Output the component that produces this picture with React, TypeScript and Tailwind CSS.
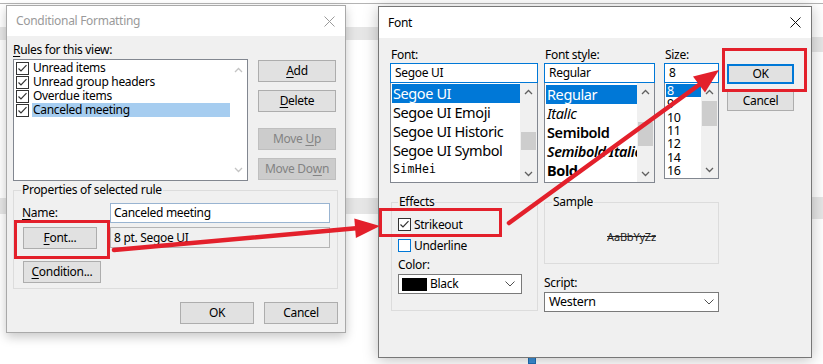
import React from 'react';

function U({ children }: { children: React.ReactNode }) {
  return <span className="underline underline-offset-2 decoration-1">{children}</span>;
}

function Check({ checked, blue }: { checked?: boolean; blue?: boolean }) {
  return (
    <svg width="13" height="13" viewBox="0 0 13 13" className="shrink-0">
      <rect x="0.5" y="0.5" width="12" height="12" fill="white" stroke={blue ? '#0078d7' : '#333333'} />
      {checked && <path d="M2.5 6.5 L5 9 L10.5 3.2" fill="none" stroke="#333333" strokeWidth="1.2" />}
    </svg>
  );
}

function Chev({ up, color = '#606060' }: { up?: boolean; color?: string }) {
  return (
    <svg width="9" height="6" viewBox="0 0 9 6">
      <path d={up ? 'M1 5 L4.5 1.5 L8 5' : 'M1 1 L4.5 4.5 L8 1'} fill="none" stroke={color} strokeWidth="1.3" />
    </svg>
  );
}

function XIcon({ color }: { color: string }) {
  return (
    <svg width="11" height="11" viewBox="0 0 11 11">
      <path d="M0.5 0.5 L10.5 10.5 M10.5 0.5 L0.5 10.5" stroke={color} strokeWidth="1" fill="none" />
    </svg>
  );
}

function DropChev() {
  return (
    <svg width="10" height="6" viewBox="0 0 10 6">
      <path d="M0.5 0.5 L5 5 L9.5 0.5" fill="none" stroke="#505050" strokeWidth="1" />
    </svg>
  );
}

function Btn({ children, className = '', disabled }: { children: React.ReactNode; className?: string; disabled?: boolean }) {
  return (
    <div
      className={
        'flex items-center justify-center border ' +
        (disabled ? 'border-[#bfbfbf] bg-[#cccccc] text-[#838383] ' : 'border-[#adadad] bg-[#e1e1e1] text-black ') +
        className
      }
    >
      {children}
    </div>
  );
}

function ScrollBar({ thumbTop, thumbH, className = '' }: { thumbTop: number; thumbH: number; className?: string }) {
  return (
    <div className={'flex w-[17px] shrink-0 flex-col bg-[#f0f0f0] ' + className}>
      <div className="flex h-[17px] items-center justify-center">
        <Chev up />
      </div>
      <div className="relative flex-1">
        <div className="absolute left-[1px] right-[1px] bg-[#cdcdcd]" style={{ top: thumbTop, height: thumbH }} />
      </div>
      <div className="flex h-[17px] items-center justify-center">
        <Chev />
      </div>
    </div>
  );
}

function ConditionalFormatting() {
  const rules = ['Unread items', 'Unread group headers', 'Overdue items', 'Canceled meeting'];
  return (
    <div className="absolute left-[6px] top-[5px] flex h-[328px] w-[340px] flex-col border border-[#a9a9a9] bg-[#f0f0f0] shadow-[0_4px_10px_rgba(0,0,0,0.22)]">
      <div className="flex h-[30px] shrink-0 items-center justify-between bg-white pl-[9px] pr-[10px] text-[12px] text-[#9a9a9a]">
        <span>Conditional Formatting</span>
        <XIcon color="#9a9a9a" />
      </div>
      <div className="flex flex-col pl-[6px] pr-[7px] pt-[6px] text-[12px] text-black">
        <div className="h-[16px] leading-[16px]">
          <U>R</U>ules for this view:
        </div>
        <div className="mt-[1px] flex">
          <div className="flex h-[122px] w-[235px] border border-[#828790] bg-white">
            <div className="flex flex-1 flex-col pt-[1px]">
              {rules.map((r, i) => (
                <div key={r} className="flex h-[14px] items-center pl-[2px]">
                  <Check checked />
                  <span
                    className={
                      'ml-[3px] flex h-[14px] w-[198px] items-center pl-[1px] leading-[14px] ' +
                      (i === 3 ? 'bg-[#a6cdf0]' : '')
                    }
                  >
                    {r}
                  </span>
                </div>
              ))}
            </div>
            <div className="flex w-[17px] flex-col items-center justify-between py-[7px]">
              <Chev up color="#c4c4c4" />
              <Chev color="#c4c4c4" />
            </div>
          </div>
          <div className="ml-[10px] flex w-[78px] flex-col pt-[1px]">
            <Btn className="h-[22px]">
              <U>A</U>dd
            </Btn>
            <Btn className="mt-[8px] h-[22px]">
              <U>D</U>elete
            </Btn>
            <Btn className="mt-[16px] h-[22px]" disabled>
              Move&nbsp;<U>U</U>p
            </Btn>
            <Btn className="mt-[8px] h-[22px]" disabled>
              Move Do<U>w</U>n
            </Btn>
          </div>
        </div>
        <fieldset className="mt-[1px] h-[107px] w-[325px] border border-[#dcdcdc] px-0">
          <legend className="ml-[7px] px-[1px] leading-[16px]">Properties of selected rule</legend>
          <div className="mt-[5px] flex items-center">
            <span className="w-[96px] pl-[8px]">
              <U>N</U>ame:
            </span>
            <div className="flex h-[20px] w-[220px] items-center border border-[#99b4d1] bg-white pl-[3px]">Canceled meeting</div>
          </div>
          <div className="mt-[4px] flex items-start">
            <div className="w-[96px] pl-[9px]">
              <Btn className="h-[22px] w-[74px]">
                <U>F</U>ont...
              </Btn>
            </div>
            <div className="flex h-[21px] w-[220px] items-center border border-[#b4b4b4] bg-[#f0f0f0] pl-[3px]">8 pt. Segoe UI</div>
          </div>
          <div className="mt-[12px] pl-[9px]">
            <Btn className="h-[22px] w-[78px]">
              <U>C</U>ondition...
            </Btn>
          </div>
        </fieldset>
        <div className="mt-[13px] flex justify-end gap-[10px]">
          <Btn className="h-[22px] w-[74px]">OK</Btn>
          <Btn className="h-[22px] w-[74px]">Cancel</Btn>
        </div>
      </div>
    </div>
  );
}

function FontDialog() {
  const fonts = ['Segoe UI', 'Segoe UI Emoji', 'Segoe UI Historic', 'Segoe UI Symbol'];
  const sizes = ['8', '9', '10', '11', '12', '14', '16'];
  return (
    <div className="absolute left-[378px] top-[6px] flex h-[352px] w-[434px] flex-col border border-[#777777] bg-[#f0f0f0] shadow-[0_2px_14px_rgba(0,0,0,0.25)]">
      <div className="flex h-[31px] shrink-0 items-center justify-between bg-white pl-[9px] pr-[10px] text-[12px] text-black">
        <span>Font</span>
        <XIcon color="#111111" />
      </div>
      <div className="flex flex-col pl-[11px] pt-[9px] text-[12px] text-black">
        <div className="flex items-start">
          {/* Font column */}
          <div className="flex w-[148px] flex-col">
            <div className="h-[16px] pl-[1px] leading-[16px]">Font:</div>
            <div className="flex h-[20px] items-center border border-[#0078d7] bg-white pl-[4px]">Segoe UI</div>
            <div className="flex h-[100px] border border-[#828790] border-t-0 bg-white">
              <div className="flex flex-1 flex-col pl-[1px] pt-[1px] text-[14.5px] tracking-[-0.4px]">
                {fonts.map((f, i) => (
                  <div
                    key={f}
                    className={'flex h-[19px] items-center pl-[1px] leading-[19px] ' + (i === 0 ? 'bg-[#0078d7] text-white' : '')}
                  >
                    {f}
                  </div>
                ))}
                <div className="flex h-[19px] items-center pl-[1px] font-['DejaVu_Sans_Mono',monospace] text-[11.5px] leading-[19px] tracking-[0.3px]">
                  SimHei
                </div>
              </div>
              <ScrollBar thumbTop={32} thumbH={18} />
            </div>
          </div>
          {/* Style column */}
          <div className="ml-[6px] flex w-[111px] flex-col">
            <div className="h-[16px] pl-[1px] leading-[16px]">Font style:</div>
            <div className="flex h-[20px] items-center border border-[#0078d7] bg-white pl-[4px]">Regular</div>
            <div className="flex h-[100px] border border-[#828790] border-t-0 bg-white">
              <div className="flex min-w-0 flex-1 flex-col overflow-hidden pl-[1px] pt-[2px] text-[14.5px] leading-[19px] tracking-[-0.4px]">
                <div className="flex h-[19px] items-center bg-[#0078d7] pl-[1px] text-white">Regular</div>
                <div className="flex h-[19px] items-center pl-[1px] italic">Italic</div>
                <div className="flex h-[19px] items-center pl-[1px] font-semibold">Semibold</div>
                <div className="flex h-[19px] items-center whitespace-nowrap pl-[1px] font-semibold italic">Semibold Italic</div>
                <div className="flex h-[19px] items-center pl-[1px] font-bold">Bold</div>
              </div>
              <ScrollBar thumbTop={22} thumbH={24} />
            </div>
          </div>
          {/* Size column */}
          <div className="ml-[9px] flex w-[55px] flex-col">
            <div className="h-[16px] pl-[1px] leading-[16px]">Size:</div>
            <div className="flex h-[20px] items-center border border-[#0078d7] bg-white pl-[4px]">8</div>
            <div className="flex h-[96px] border border-[#828790] border-t-0 bg-white">
              <div className="flex flex-1 flex-col pl-[1px] pt-[1px] text-[12.5px] leading-[13px]">
                {sizes.map((s, i) => (
                  <div
                    key={s}
                    className={'flex h-[13.3px] items-center pl-[1px] ' + (i === 0 ? 'bg-[#0078d7] text-white' : '')}
                  >
                    {s}
                  </div>
                ))}
              </div>
              <ScrollBar thumbTop={1} thumbH={25} />
            </div>
          </div>
          {/* Buttons */}
          <div className="ml-[8px] mt-[17px] flex w-[67px] flex-col">
            <Btn className="h-[20px] !border-2 !border-[#0078d7]">OK</Btn>
            <Btn className="mt-[7px] h-[20px]">Cancel</Btn>
          </div>
        </div>
        <div className="mt-[11px] flex items-start">
          <fieldset className="ml-[1px] h-[117px] w-[147px] border border-[#dcdcdc] px-0">
            <legend className="ml-[6px] px-[1px] leading-[16px]">Effects</legend>
            <div className="mt-[7px] flex h-[15px] items-center pl-[6px]">
              <Check checked />
              <span className="ml-[3px]">Strikeout</span>
            </div>
            <div className="mt-[6px] flex h-[15px] items-center pl-[6px]">
              <Check blue />
              <span className="ml-[3px]">Underline</span>
            </div>
            <div className="mt-[4px] h-[16px] pl-[6px] leading-[16px]">Color:</div>
            <div className="ml-[6px] mt-[1px] flex h-[20px] w-[124px] items-center border border-[#7a7a7a] bg-white pl-[3px] pr-[6px]">
              <div className="h-[13px] w-[25px] bg-black" />
              <span className="ml-[3px] flex-1">Black</span>
              <DropChev />
            </div>
          </fieldset>
          <div className="ml-[6px] flex w-[175px] flex-col">
            <fieldset className="h-[70px] border border-[#dcdcdc] px-0">
              <legend className="ml-[7px] px-[1px] leading-[16px]">Sample</legend>
              <div className="flex h-[50px] items-center justify-center pt-[4px] text-[11px] tracking-[-0.2px] text-[#222] line-through">AaBbYyZz</div>
            </fieldset>
            <div className="mt-[11px] h-[16px] leading-[16px]">Script:</div>
            <div className="mt-[1px] flex h-[20px] items-center border border-[#7a7a7a] bg-white pl-[4px] pr-[4px] text-[12.5px]">
              <span className="flex-1">Western</span>
              <DropChev />
            </div>
          </div>
        </div>
      </div>
    </div>
  );
}

function Annotations() {
  const red = '#e3202b';
  return (
    <svg className="pointer-events-none absolute left-0 top-0" width="823" height="364" viewBox="0 0 823 364">
      <rect x="15.5" y="221.5" width="93" height="36" fill="none" stroke={red} strokeWidth="3" />
      <rect x="380.5" y="209.5" width="120" height="26" fill="none" stroke={red} strokeWidth="3" />
      <rect x="723.5" y="49.5" width="82" height="41" fill="none" stroke={red} strokeWidth="3" />
      <line x1="114" y1="250" x2="356" y2="228.2" stroke={red} strokeWidth="4.5" strokeLinecap="round" />
      <polygon points="380,226 355.9,238 354.3,218.6" fill={red} />
      <line x1="509" y1="223" x2="699.5" y2="84.5" stroke={red} strokeWidth="4.5" strokeLinecap="round" />
      <polygon points="719,70 705,92.5 693,76.5" fill={red} />
    </svg>
  );
}

export default function App() {
  return (
    <div className="relative h-[364px] w-[823px] overflow-hidden bg-white font-['Noto_Sans',sans-serif] tracking-[-0.3px]">
      {/* backdrop */}
      <div className="absolute left-0 top-[3px] h-px w-full bg-[#b4b4b4]" />
      <div className="absolute left-0 top-[27px] h-[13px] w-[600px] bg-[#e6e6e6]" />
      <div className="absolute left-[600px] top-[37px] h-[15px] w-[223px] bg-[#e6e6e6]" />
      <div className="absolute left-0 top-[198px] h-[16px] w-[600px] bg-[#e6e6e6]" />
      <div className="absolute left-[600px] top-[197px] h-[22px] w-[223px] bg-[#e6e6e6]" />
      <div className="absolute left-[528px] top-[356px] h-[8px] w-[8px] border border-[#1f6fb5] bg-[#3c8fd6]" />
      <ConditionalFormatting />
      <FontDialog />
      <Annotations />
    </div>
  );
}
